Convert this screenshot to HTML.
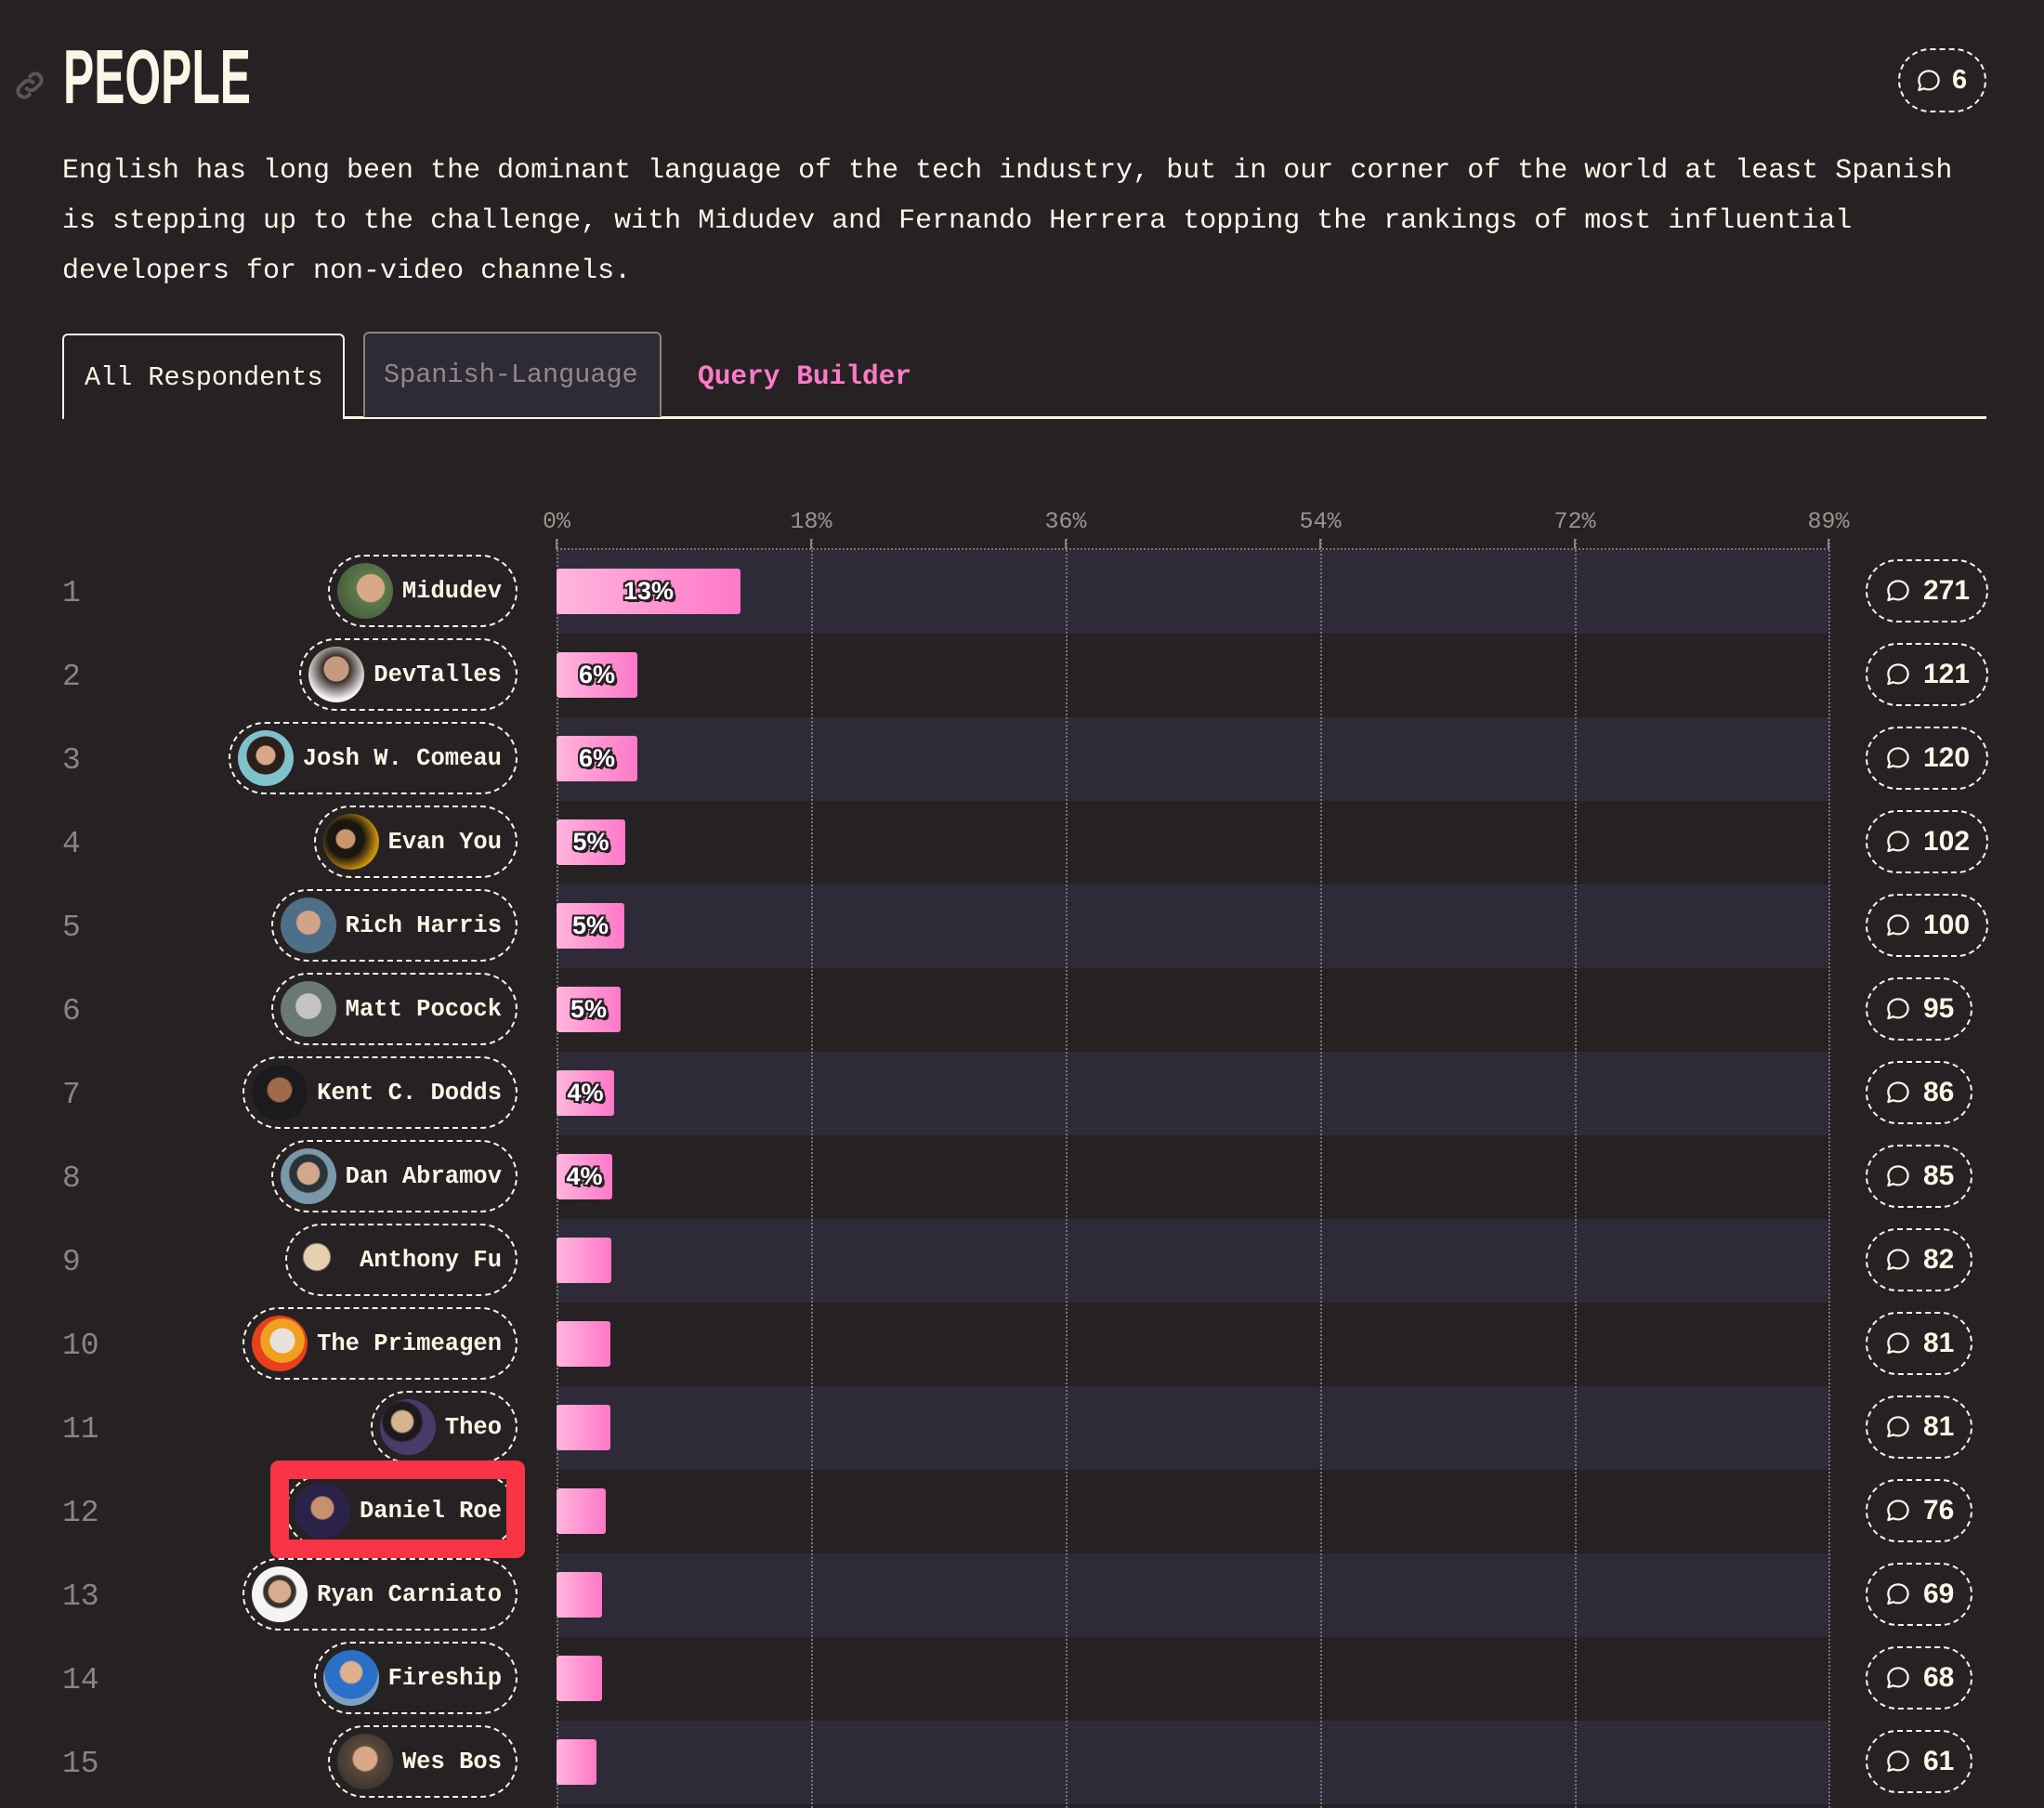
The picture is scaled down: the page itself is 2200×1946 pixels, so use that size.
<!DOCTYPE html>
<html><head><meta charset="utf-8">
<style>
*{margin:0;padding:0;box-sizing:border-box}
html,body{width:2200px;height:1946px;background:#262224;overflow:hidden;color:#fdf5e6;font-family:"Liberation Mono",monospace}
.abs{position:absolute}
.title{left:68px;top:38px;font-family:"Liberation Sans",sans-serif;font-weight:700;font-size:83px;line-height:90px;transform:scaleX(0.6);transform-origin:left top;color:#fdf5e6}
.para{left:67px;top:157px;width:2120px;font-size:30px;line-height:54px;color:#fdf5e6;white-space:pre}
.tab1{left:67px;top:359px;width:304px;height:92px;border:2px solid #fdf5e6;border-bottom:none;border-radius:6px 6px 0 0;background:#262224;font-size:28.5px;line-height:92px;padding-left:22px}
.tab2{left:391px;top:357px;width:321px;height:92px;border:2px solid #8a847c;border-bottom:none;border-radius:6px 6px 0 0;background:#2f2a37;font-size:28.5px;line-height:90px;padding-left:20px;color:#8f8a86}
.tab3{left:751px;top:380px;font-size:29.5px;font-weight:700;color:#ff7ac6;line-height:50px}
.tabline{left:370px;top:448px;width:1768px;height:3px;background:#fdf5e6}
.badge{border:2px dashed #fdf5e6;border-radius:40px;display:flex;align-items:center;font-family:"Liberation Sans",sans-serif;font-weight:700;color:#fdf5e6}
.ax{top:547px;font-size:25px;color:#9a948e;transform:translateX(-50%)}
.vl{top:580px;height:1366px;width:0;border-left:2px dotted #77727a}
.tick{top:580px;height:11px;width:2px;background:#8a8580}
.band{left:599px;width:1370px;height:90px;background:#2e2a38}
.rank{left:67px;font-size:33px;color:#8a8580;width:80px;line-height:94px;height:90px}
.pill{right:1643px;height:78px;border:2.5px dashed #fdf5e6;border-radius:40px;display:flex;align-items:center;padding:0 15px 0 8px;font-weight:700;font-size:25.5px;white-space:pre}
.av{width:60px;height:60px;border-radius:50%;margin-right:10px;flex:none}
.bar{left:599px;height:49px;border-radius:3px;background:linear-gradient(90deg,#ffb6dd,#ff78c8);display:flex;align-items:center;justify-content:center;font-family:"Liberation Sans",sans-serif;font-weight:700;font-size:27px;color:#fff;text-shadow:2px 0 #2a1f26,-2px 0 #2a1f26,0 2px #2a1f26,0 -2px #2a1f26,2px 2px #2a1f26,-2px -2px #2a1f26,2px -2px #2a1f26,-2px 2px #2a1f26,3px 3px #2a1f26}
.cp{left:2008px;height:68px;padding:0 18px 0 18px;font-size:30px;gap:12px}
</style></head><body>

<svg class="abs" style="left:12px;top:72px" width="40" height="40" viewBox="0 0 24 24" fill="none" stroke="#5a5658" stroke-width="2.4" stroke-linecap="round"><path d="M10 14a4 4 0 0 0 5.6 0l3.2-3.2a4 4 0 0 0-5.6-5.6l-1 1"/><path d="M14 10a4 4 0 0 0-5.6 0l-3.2 3.2a4 4 0 0 0 5.6 5.6l1-1"/></svg>
<div class="abs title">PEOPLE</div>

<div class="abs badge" style="left:2043px;top:52px;width:95px;height:69px;padding-left:16px;gap:10px;font-size:29px">
<svg width="30" height="30" viewBox="0 0 24 24" fill="none" stroke="#fdf5e6" stroke-width="1.8" stroke-linejoin="round"><path d="M12 3.5c4.9 0 8.5 3.6 8.5 8s-3.6 8-8.5 8c-1.5 0-2.9-.3-4.1-.9L3.5 20l1.2-4C3.9 14.7 3.5 13.2 3.5 11.5c0-4.4 3.6-8 8.5-8z"/></svg>6</div>

<div class="abs para">English has long been the dominant language of the tech industry, but in our corner of the world at least Spanish
is stepping up to the challenge, with Midudev and Fernando Herrera topping the rankings of most influential
developers for non-video channels.</div>

<div class="abs tabline"></div>
<div class="abs tab1">All Respondents</div>
<div class="abs tab2">Spanish-Language</div>
<div class="abs tab3">Query Builder</div>

<div class="abs band" style="top:592px"></div>
<div class="abs band" style="top:772px"></div>
<div class="abs band" style="top:952px"></div>
<div class="abs band" style="top:1132px"></div>
<div class="abs band" style="top:1312px"></div>
<div class="abs band" style="top:1492px"></div>
<div class="abs band" style="top:1672px"></div>
<div class="abs band" style="top:1852px"></div>

<div class="abs" style="left:599px;top:590px;width:1370px;height:0;border-top:2px dotted #77727a"></div>
<div class="abs vl" style="left:599px"></div>
<div class="abs vl" style="left:873px"></div>
<div class="abs vl" style="left:1147px"></div>
<div class="abs vl" style="left:1421px"></div>
<div class="abs vl" style="left:1695px"></div>
<div class="abs vl" style="left:1968px"></div>
<div class="abs tick" style="left:598px"></div><div class="abs tick" style="left:872px"></div><div class="abs tick" style="left:1146px"></div><div class="abs tick" style="left:1420px"></div><div class="abs tick" style="left:1694px"></div><div class="abs tick" style="left:1967px"></div>
<div class="abs ax" style="left:599px">0%</div>
<div class="abs ax" style="left:873px">18%</div>
<div class="abs ax" style="left:1147px">36%</div>
<div class="abs ax" style="left:1421px">54%</div>
<div class="abs ax" style="left:1695px">72%</div>
<div class="abs ax" style="left:1968px">89%</div>

<div class="abs rank" style="top:592px">1</div>
<div class="abs pill" style="top:597px"><div class="av" style="background:radial-gradient(circle at 60% 45%,#d9a886 0 30%,#5d7a4a 32%,#3b4d35)"></div>Midudev</div>
<div class="abs bar" style="top:612px;width:198px">13%</div>
<div class="abs badge cp" style="top:602px"><svg width="30" height="30" viewBox="0 0 24 24" fill="none" stroke="#fdf5e6" stroke-width="1.8" stroke-linejoin="round"><path d="M12 3.5c4.9 0 8.5 3.6 8.5 8s-3.6 8-8.5 8c-1.5 0-2.9-.3-4.1-.9L3.5 20l1.2-4C3.9 14.7 3.5 13.2 3.5 11.5c0-4.4 3.6-8 8.5-8z"/></svg>271</div>

<div class="abs rank" style="top:682px">2</div>
<div class="abs pill" style="top:687px"><div class="av" style="background:radial-gradient(circle at 50% 40%,#c69a80 0 28%,#3a2d28 30%,#f2f2f2 70%)"></div>DevTalles</div>
<div class="abs bar" style="top:702px;width:87px">6%</div>
<div class="abs badge cp" style="top:692px"><svg width="30" height="30" viewBox="0 0 24 24" fill="none" stroke="#fdf5e6" stroke-width="1.8" stroke-linejoin="round"><path d="M12 3.5c4.9 0 8.5 3.6 8.5 8s-3.6 8-8.5 8c-1.5 0-2.9-.3-4.1-.9L3.5 20l1.2-4C3.9 14.7 3.5 13.2 3.5 11.5c0-4.4 3.6-8 8.5-8z"/></svg>121</div>

<div class="abs rank" style="top:772px">3</div>
<div class="abs pill" style="top:777px"><div class="av" style="background:radial-gradient(circle at 50% 45%,#d7a98a 0 22%,#2a1f1a 25% 45%,#7fc2c9 47%)"></div>Josh W. Comeau</div>
<div class="abs bar" style="top:792px;width:87px">6%</div>
<div class="abs badge cp" style="top:782px"><svg width="30" height="30" viewBox="0 0 24 24" fill="none" stroke="#fdf5e6" stroke-width="1.8" stroke-linejoin="round"><path d="M12 3.5c4.9 0 8.5 3.6 8.5 8s-3.6 8-8.5 8c-1.5 0-2.9-.3-4.1-.9L3.5 20l1.2-4C3.9 14.7 3.5 13.2 3.5 11.5c0-4.4 3.6-8 8.5-8z"/></svg>120</div>

<div class="abs rank" style="top:862px">4</div>
<div class="abs pill" style="top:867px"><div class="av" style="background:radial-gradient(circle at 40% 45%,#c9966f 0 20%,#1a1612 23% 40%,#c8900c 70%)"></div>Evan You</div>
<div class="abs bar" style="top:882px;width:74px">5%</div>
<div class="abs badge cp" style="top:872px"><svg width="30" height="30" viewBox="0 0 24 24" fill="none" stroke="#fdf5e6" stroke-width="1.8" stroke-linejoin="round"><path d="M12 3.5c4.9 0 8.5 3.6 8.5 8s-3.6 8-8.5 8c-1.5 0-2.9-.3-4.1-.9L3.5 20l1.2-4C3.9 14.7 3.5 13.2 3.5 11.5c0-4.4 3.6-8 8.5-8z"/></svg>102</div>

<div class="abs rank" style="top:952px">5</div>
<div class="abs pill" style="top:957px"><div class="av" style="background:radial-gradient(circle at 50% 45%,#d1a487 0 28%,#4e6f88 30%)"></div>Rich Harris</div>
<div class="abs bar" style="top:972px;width:73px">5%</div>
<div class="abs badge cp" style="top:962px"><svg width="30" height="30" viewBox="0 0 24 24" fill="none" stroke="#fdf5e6" stroke-width="1.8" stroke-linejoin="round"><path d="M12 3.5c4.9 0 8.5 3.6 8.5 8s-3.6 8-8.5 8c-1.5 0-2.9-.3-4.1-.9L3.5 20l1.2-4C3.9 14.7 3.5 13.2 3.5 11.5c0-4.4 3.6-8 8.5-8z"/></svg>100</div>

<div class="abs rank" style="top:1042px">6</div>
<div class="abs pill" style="top:1047px"><div class="av" style="background:radial-gradient(circle at 50% 45%,#c4c4c4 0 30%,#6a7a72 32%)"></div>Matt Pocock</div>
<div class="abs bar" style="top:1062px;width:69px">5%</div>
<div class="abs badge cp" style="top:1052px"><svg width="30" height="30" viewBox="0 0 24 24" fill="none" stroke="#fdf5e6" stroke-width="1.8" stroke-linejoin="round"><path d="M12 3.5c4.9 0 8.5 3.6 8.5 8s-3.6 8-8.5 8c-1.5 0-2.9-.3-4.1-.9L3.5 20l1.2-4C3.9 14.7 3.5 13.2 3.5 11.5c0-4.4 3.6-8 8.5-8z"/></svg>95</div>

<div class="abs rank" style="top:1132px">7</div>
<div class="abs pill" style="top:1137px"><div class="av" style="background:radial-gradient(circle at 50% 45%,#a06a4c 0 28%,#1b1a1c 32%)"></div>Kent C. Dodds</div>
<div class="abs bar" style="top:1152px;width:62px">4%</div>
<div class="abs badge cp" style="top:1142px"><svg width="30" height="30" viewBox="0 0 24 24" fill="none" stroke="#fdf5e6" stroke-width="1.8" stroke-linejoin="round"><path d="M12 3.5c4.9 0 8.5 3.6 8.5 8s-3.6 8-8.5 8c-1.5 0-2.9-.3-4.1-.9L3.5 20l1.2-4C3.9 14.7 3.5 13.2 3.5 11.5c0-4.4 3.6-8 8.5-8z"/></svg>86</div>

<div class="abs rank" style="top:1222px">8</div>
<div class="abs pill" style="top:1227px"><div class="av" style="background:radial-gradient(circle at 50% 45%,#d0a88e 0 26%,#2c3338 29% 45%,#7a98a8 48%)"></div>Dan Abramov</div>
<div class="abs bar" style="top:1242px;width:60px">4%</div>
<div class="abs badge cp" style="top:1232px"><svg width="30" height="30" viewBox="0 0 24 24" fill="none" stroke="#fdf5e6" stroke-width="1.8" stroke-linejoin="round"><path d="M12 3.5c4.9 0 8.5 3.6 8.5 8s-3.6 8-8.5 8c-1.5 0-2.9-.3-4.1-.9L3.5 20l1.2-4C3.9 14.7 3.5 13.2 3.5 11.5c0-4.4 3.6-8 8.5-8z"/></svg>85</div>

<div class="abs rank" style="top:1312px">9</div>
<div class="abs pill" style="top:1317px"><div class="av" style="background:radial-gradient(circle at 40% 45%,#e8cfb0 0 28%,#262224 32%)"></div>Anthony Fu</div>
<div class="abs bar" style="top:1332px;width:59px"></div>
<div class="abs badge cp" style="top:1322px"><svg width="30" height="30" viewBox="0 0 24 24" fill="none" stroke="#fdf5e6" stroke-width="1.8" stroke-linejoin="round"><path d="M12 3.5c4.9 0 8.5 3.6 8.5 8s-3.6 8-8.5 8c-1.5 0-2.9-.3-4.1-.9L3.5 20l1.2-4C3.9 14.7 3.5 13.2 3.5 11.5c0-4.4 3.6-8 8.5-8z"/></svg>82</div>

<div class="abs rank" style="top:1402px">10</div>
<div class="abs pill" style="top:1407px"><div class="av" style="background:radial-gradient(circle at 55% 45%,#e8e0da 0 28%,#f0a020 30% 50%,#e8401c 52%)"></div>The Primeagen</div>
<div class="abs bar" style="top:1422px;width:58px"></div>
<div class="abs badge cp" style="top:1412px"><svg width="30" height="30" viewBox="0 0 24 24" fill="none" stroke="#fdf5e6" stroke-width="1.8" stroke-linejoin="round"><path d="M12 3.5c4.9 0 8.5 3.6 8.5 8s-3.6 8-8.5 8c-1.5 0-2.9-.3-4.1-.9L3.5 20l1.2-4C3.9 14.7 3.5 13.2 3.5 11.5c0-4.4 3.6-8 8.5-8z"/></svg>81</div>

<div class="abs rank" style="top:1492px">11</div>
<div class="abs pill" style="top:1497px"><div class="av" style="background:radial-gradient(circle at 40% 40%,#d8b48e 0 22%,#1c1a1c 26% 40%,#4a3a6a 45%)"></div>Theo</div>
<div class="abs bar" style="top:1512px;width:58px"></div>
<div class="abs badge cp" style="top:1502px"><svg width="30" height="30" viewBox="0 0 24 24" fill="none" stroke="#fdf5e6" stroke-width="1.8" stroke-linejoin="round"><path d="M12 3.5c4.9 0 8.5 3.6 8.5 8s-3.6 8-8.5 8c-1.5 0-2.9-.3-4.1-.9L3.5 20l1.2-4C3.9 14.7 3.5 13.2 3.5 11.5c0-4.4 3.6-8 8.5-8z"/></svg>81</div>

<div class="abs rank" style="top:1582px">12</div>
<div class="abs pill" style="top:1587px"><div class="av" style="background:radial-gradient(circle at 50% 45%,#c8906c 0 26%,#2a2248 30%)"></div>Daniel Roe</div>
<div class="abs" style="left:291px;top:1572px;width:274px;height:105px;border:20px solid #f73345;border-radius:9px"></div>
<div class="abs bar" style="top:1602px;width:53px"></div>
<div class="abs badge cp" style="top:1592px"><svg width="30" height="30" viewBox="0 0 24 24" fill="none" stroke="#fdf5e6" stroke-width="1.8" stroke-linejoin="round"><path d="M12 3.5c4.9 0 8.5 3.6 8.5 8s-3.6 8-8.5 8c-1.5 0-2.9-.3-4.1-.9L3.5 20l1.2-4C3.9 14.7 3.5 13.2 3.5 11.5c0-4.4 3.6-8 8.5-8z"/></svg>76</div>

<div class="abs rank" style="top:1672px">13</div>
<div class="abs pill" style="top:1677px"><div class="av" style="background:radial-gradient(circle at 50% 45%,#d8ac90 0 26%,#3b3028 29% 38%,#f4f4f4 42%)"></div>Ryan Carniato</div>
<div class="abs bar" style="top:1692px;width:49px"></div>
<div class="abs badge cp" style="top:1682px"><svg width="30" height="30" viewBox="0 0 24 24" fill="none" stroke="#fdf5e6" stroke-width="1.8" stroke-linejoin="round"><path d="M12 3.5c4.9 0 8.5 3.6 8.5 8s-3.6 8-8.5 8c-1.5 0-2.9-.3-4.1-.9L3.5 20l1.2-4C3.9 14.7 3.5 13.2 3.5 11.5c0-4.4 3.6-8 8.5-8z"/></svg>69</div>

<div class="abs rank" style="top:1762px">14</div>
<div class="abs pill" style="top:1767px"><div class="av" style="background:radial-gradient(circle at 50% 40%,#e0b08a 0 24%,#2a6fc8 28% 60%,#7fa0c0 62%)"></div>Fireship</div>
<div class="abs bar" style="top:1782px;width:49px"></div>
<div class="abs badge cp" style="top:1772px"><svg width="30" height="30" viewBox="0 0 24 24" fill="none" stroke="#fdf5e6" stroke-width="1.8" stroke-linejoin="round"><path d="M12 3.5c4.9 0 8.5 3.6 8.5 8s-3.6 8-8.5 8c-1.5 0-2.9-.3-4.1-.9L3.5 20l1.2-4C3.9 14.7 3.5 13.2 3.5 11.5c0-4.4 3.6-8 8.5-8z"/></svg>68</div>

<div class="abs rank" style="top:1852px">15</div>
<div class="abs pill" style="top:1857px"><div class="av" style="background:radial-gradient(circle at 50% 45%,#d8a888 0 28%,#5a4a3a 32%,#2a2a2a)"></div>Wes Bos</div>
<div class="abs bar" style="top:1872px;width:43px"></div>
<div class="abs badge cp" style="top:1862px"><svg width="30" height="30" viewBox="0 0 24 24" fill="none" stroke="#fdf5e6" stroke-width="1.8" stroke-linejoin="round"><path d="M12 3.5c4.9 0 8.5 3.6 8.5 8s-3.6 8-8.5 8c-1.5 0-2.9-.3-4.1-.9L3.5 20l1.2-4C3.9 14.7 3.5 13.2 3.5 11.5c0-4.4 3.6-8 8.5-8z"/></svg>61</div>

</body></html>
